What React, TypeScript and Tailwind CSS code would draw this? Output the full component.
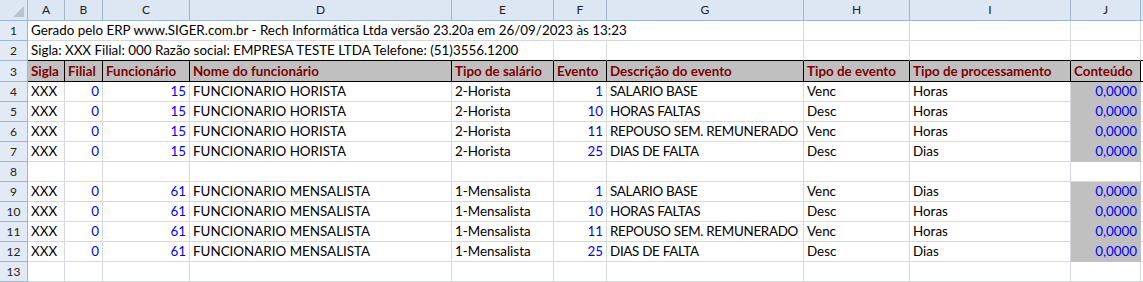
import React from 'react';

const COLS = ['A', 'B', 'C', 'D', 'E', 'F', 'G', 'H', 'I', 'J'];

type Row = {
  sigla: string;
  filial: number;
  func: number;
  nome: string;
  tipoSal: string;
  evento: number;
  desc: string;
  tipoEv: string;
  proc: string;
};

const horista: Row[] = [
  { sigla: 'XXX', filial: 0, func: 15, nome: 'FUNCIONARIO HORISTA', tipoSal: '2-Horista', evento: 1, desc: 'SALARIO BASE', tipoEv: 'Venc', proc: 'Horas' },
  { sigla: 'XXX', filial: 0, func: 15, nome: 'FUNCIONARIO HORISTA', tipoSal: '2-Horista', evento: 10, desc: 'HORAS FALTAS', tipoEv: 'Desc', proc: 'Horas' },
  { sigla: 'XXX', filial: 0, func: 15, nome: 'FUNCIONARIO HORISTA', tipoSal: '2-Horista', evento: 11, desc: 'REPOUSO SEM. REMUNERADO', tipoEv: 'Venc', proc: 'Horas' },
  { sigla: 'XXX', filial: 0, func: 15, nome: 'FUNCIONARIO HORISTA', tipoSal: '2-Horista', evento: 25, desc: 'DIAS DE FALTA', tipoEv: 'Desc', proc: 'Dias' },
];

const mensalista: Row[] = [
  { sigla: 'XXX', filial: 0, func: 61, nome: 'FUNCIONARIO MENSALISTA', tipoSal: '1-Mensalista', evento: 1, desc: 'SALARIO BASE', tipoEv: 'Venc', proc: 'Dias' },
  { sigla: 'XXX', filial: 0, func: 61, nome: 'FUNCIONARIO MENSALISTA', tipoSal: '1-Mensalista', evento: 10, desc: 'HORAS FALTAS', tipoEv: 'Desc', proc: 'Horas' },
  { sigla: 'XXX', filial: 0, func: 61, nome: 'FUNCIONARIO MENSALISTA', tipoSal: '1-Mensalista', evento: 11, desc: 'REPOUSO SEM. REMUNERADO', tipoEv: 'Venc', proc: 'Horas' },
  { sigla: 'XXX', filial: 0, func: 61, nome: 'FUNCIONARIO MENSALISTA', tipoSal: '1-Mensalista', evento: 25, desc: 'DIAS DE FALTA', tipoEv: 'Desc', proc: 'Dias' },
];

const headers = [
  'Sigla', 'Filial', 'Funcionário', 'Nome do funcionário', 'Tipo de salário',
  'Evento', 'Descrição do evento', 'Tipo de evento', 'Tipo de processamento', 'Conteúdo',
];

type Kind = 'text' | 'num' | 'fill' | 'last';

// plain worksheet cell; kind picks colour/border so no classes fight each other
function Cell({ children, kind = 'text', className = '' }: { children?: React.ReactNode; kind?: Kind; className?: string }) {
  const look =
    kind === 'num'
      ? 'border-[#d5d8dc] text-right text-[#0000ff]'
      : kind === 'fill'
        ? 'border-[#c0c0c0] bg-[#c0c0c0] text-right text-[#0000ff]'
        : kind === 'last'
          ? 'border-b-black border-r-[#d5d8dc] text-black'
          : 'border-[#d5d8dc] text-black';
  return (
    <div className={`overflow-visible whitespace-nowrap border-r border-b px-[3px] text-[13.4px] leading-[19px] ${look} ${className}`}>
      {children}
    </div>
  );
}

function RowNum({ n }: { n: number }) {
  return (
    <div className="flex items-center justify-center border-r border-b border-[#9eb6ce] bg-[#e2eaf5] text-[12px] leading-[19px] text-[#222]">
      {n}
    </div>
  );
}

function DataRow({ n, r }: { n: number; r: Row }) {
  return (
    <>
      <RowNum n={n} />
      <Cell>{r.sigla}</Cell>
      <Cell kind="num">{r.filial}</Cell>
      <Cell kind="num">{r.func}</Cell>
      <Cell>{r.nome}</Cell>
      <Cell>{r.tipoSal}</Cell>
      <Cell kind="num">{r.evento}</Cell>
      <Cell className="tracking-[-0.3px]">{r.desc}</Cell>
      <Cell>{r.tipoEv}</Cell>
      <Cell>{r.proc}</Cell>
      <Cell kind="fill">0,0000</Cell>
      <Cell />
    </>
  );
}

function EmptyRow({ n }: { n: number }) {
  return (
    <>
      <RowNum n={n} />
      {COLS.map(c => <Cell key={c} />)}
      <Cell />
    </>
  );
}

export default function App() {
  return (
    <div className="h-[282px] w-[1143px] overflow-hidden bg-white font-['Lato',sans-serif]">
      <div className="grid grid-cols-[28px_37px_38px_87px_262px_102px_53px_197px_106px_161px_70px_1fr] grid-rows-[21px_20px_20px_21px_repeat(10,20px)]">
        {/* column headers */}
        <div className="relative border-r border-b border-[#9eb6ce] bg-[#dde7f3]">
          <svg className="absolute right-[3px] bottom-[3px]" width="11" height="11" viewBox="0 0 11 11">
            <polygon points="11,0 11,11 0,11" fill="#b7c3d3" />
          </svg>
        </div>
        {COLS.map(c => (
          <div key={c} className="flex items-center justify-center border-r border-b border-[#9eb6ce] bg-[#dde7f3] text-[12px] text-[#222]">
            {c}
          </div>
        ))}
        <div className="border-b border-[#9eb6ce] bg-[#dde7f3]" />

        {/* row 1 */}
        <RowNum n={1} />
        <Cell className="col-span-7">
          Gerado pelo ERP www.SIGER.com.br - Rech Informática Ltda versão 23.20a em 26/09/2023 às 13:23
        </Cell>
        <Cell />
        <Cell />
        <Cell />
        <Cell />

        {/* row 2 */}
        <RowNum n={2} />
        <Cell kind="last" className="col-span-5">
          Sigla: XXX Filial: 000 Razão social: EMPRESA TESTE LTDA Telefone: (51)3556.1200
        </Cell>
        <Cell kind="last" />
        <Cell kind="last" />
        <Cell kind="last" />
        <Cell kind="last" />
        <Cell kind="last" />
        <Cell kind="last" />

        {/* row 3: column titles */}
        <RowNum n={3} />
        {headers.map(h => (
          <div key={h} className="whitespace-nowrap border-r border-b border-black bg-[#c0c0c0] px-[3px] text-[13.4px] leading-[20px] font-bold text-[#800000]">
            {h}
          </div>
        ))}
        <div className="border-b border-black" />

        {horista.map((r, i) => <DataRow key={`h${i}`} n={4 + i} r={r} />)}
        <EmptyRow n={8} />
        {mensalista.map((r, i) => <DataRow key={`m${i}`} n={9 + i} r={r} />)}
        <EmptyRow n={13} />
      </div>
    </div>
  );
}
